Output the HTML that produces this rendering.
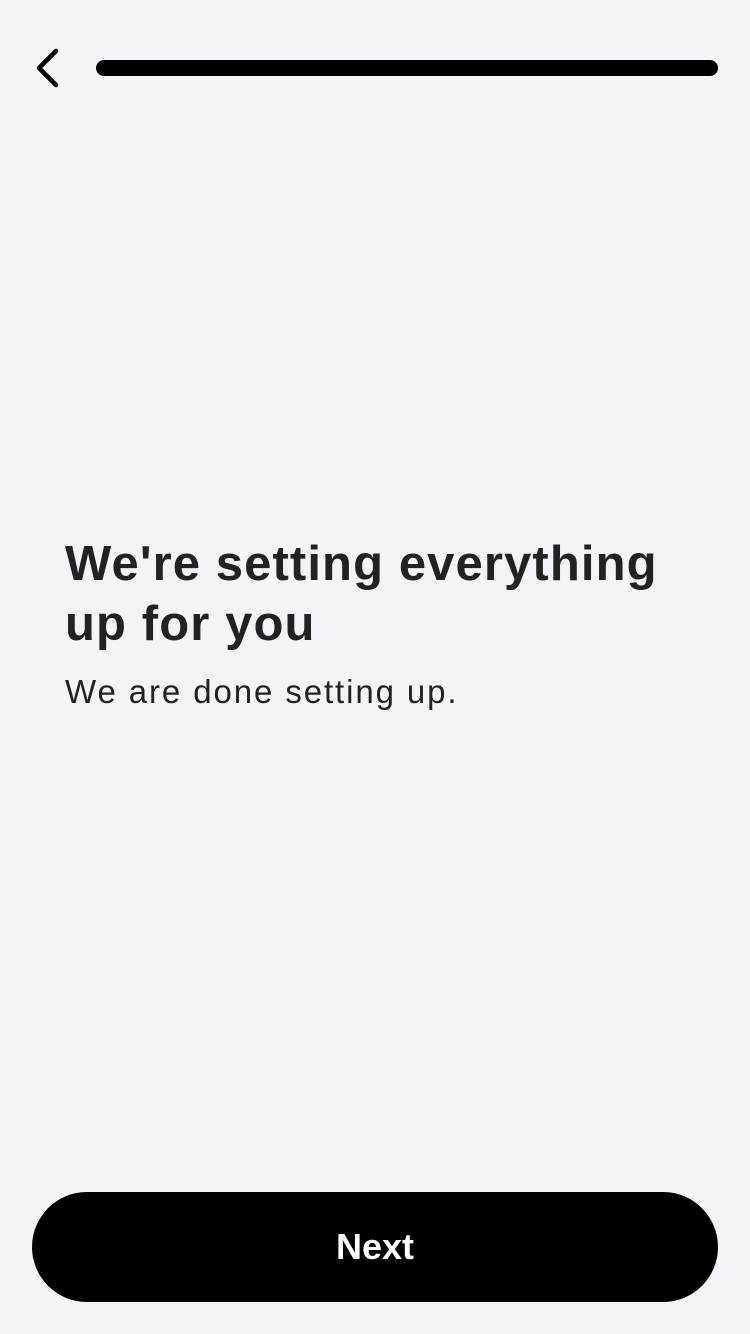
<!DOCTYPE html>
<html><head><style>
html,body{margin:0;padding:0;}
body{width:750px;height:1334px;background:#f4f3f8;position:relative;font-family:"Liberation Sans",sans-serif;overflow:hidden;}
.bar{position:absolute;left:96px;top:60px;width:622px;height:16px;border-radius:8px;background:#000;}
.back{position:absolute;left:30px;top:46px;}
h1{position:absolute;left:65px;top:534px;margin:0;font-size:49px;line-height:60px;font-weight:bold;color:#222;letter-spacing:1.1px;width:700px;white-space:nowrap;}
p{position:absolute;left:65px;top:672px;margin:0;font-size:33px;line-height:40px;color:#222;letter-spacing:1.9px;}
.btn{position:absolute;left:32px;top:1192px;width:686px;height:110px;border-radius:55px;background:#000;color:#fff;font-size:36px;font-weight:bold;text-align:center;line-height:110px;}
</style></head><body>
<svg class="back" width="40" height="44" viewBox="0 0 40 44"><path d="M26 5 L9 22 L26 39" fill="none" stroke="#000" stroke-width="4.5" stroke-linecap="round" stroke-linejoin="round"/></svg>
<div class="bar"></div>
<h1>We're setting everything<br>up for you</h1>
<p>We are done setting up.</p>
<div class="btn">Next</div>
</body></html>
